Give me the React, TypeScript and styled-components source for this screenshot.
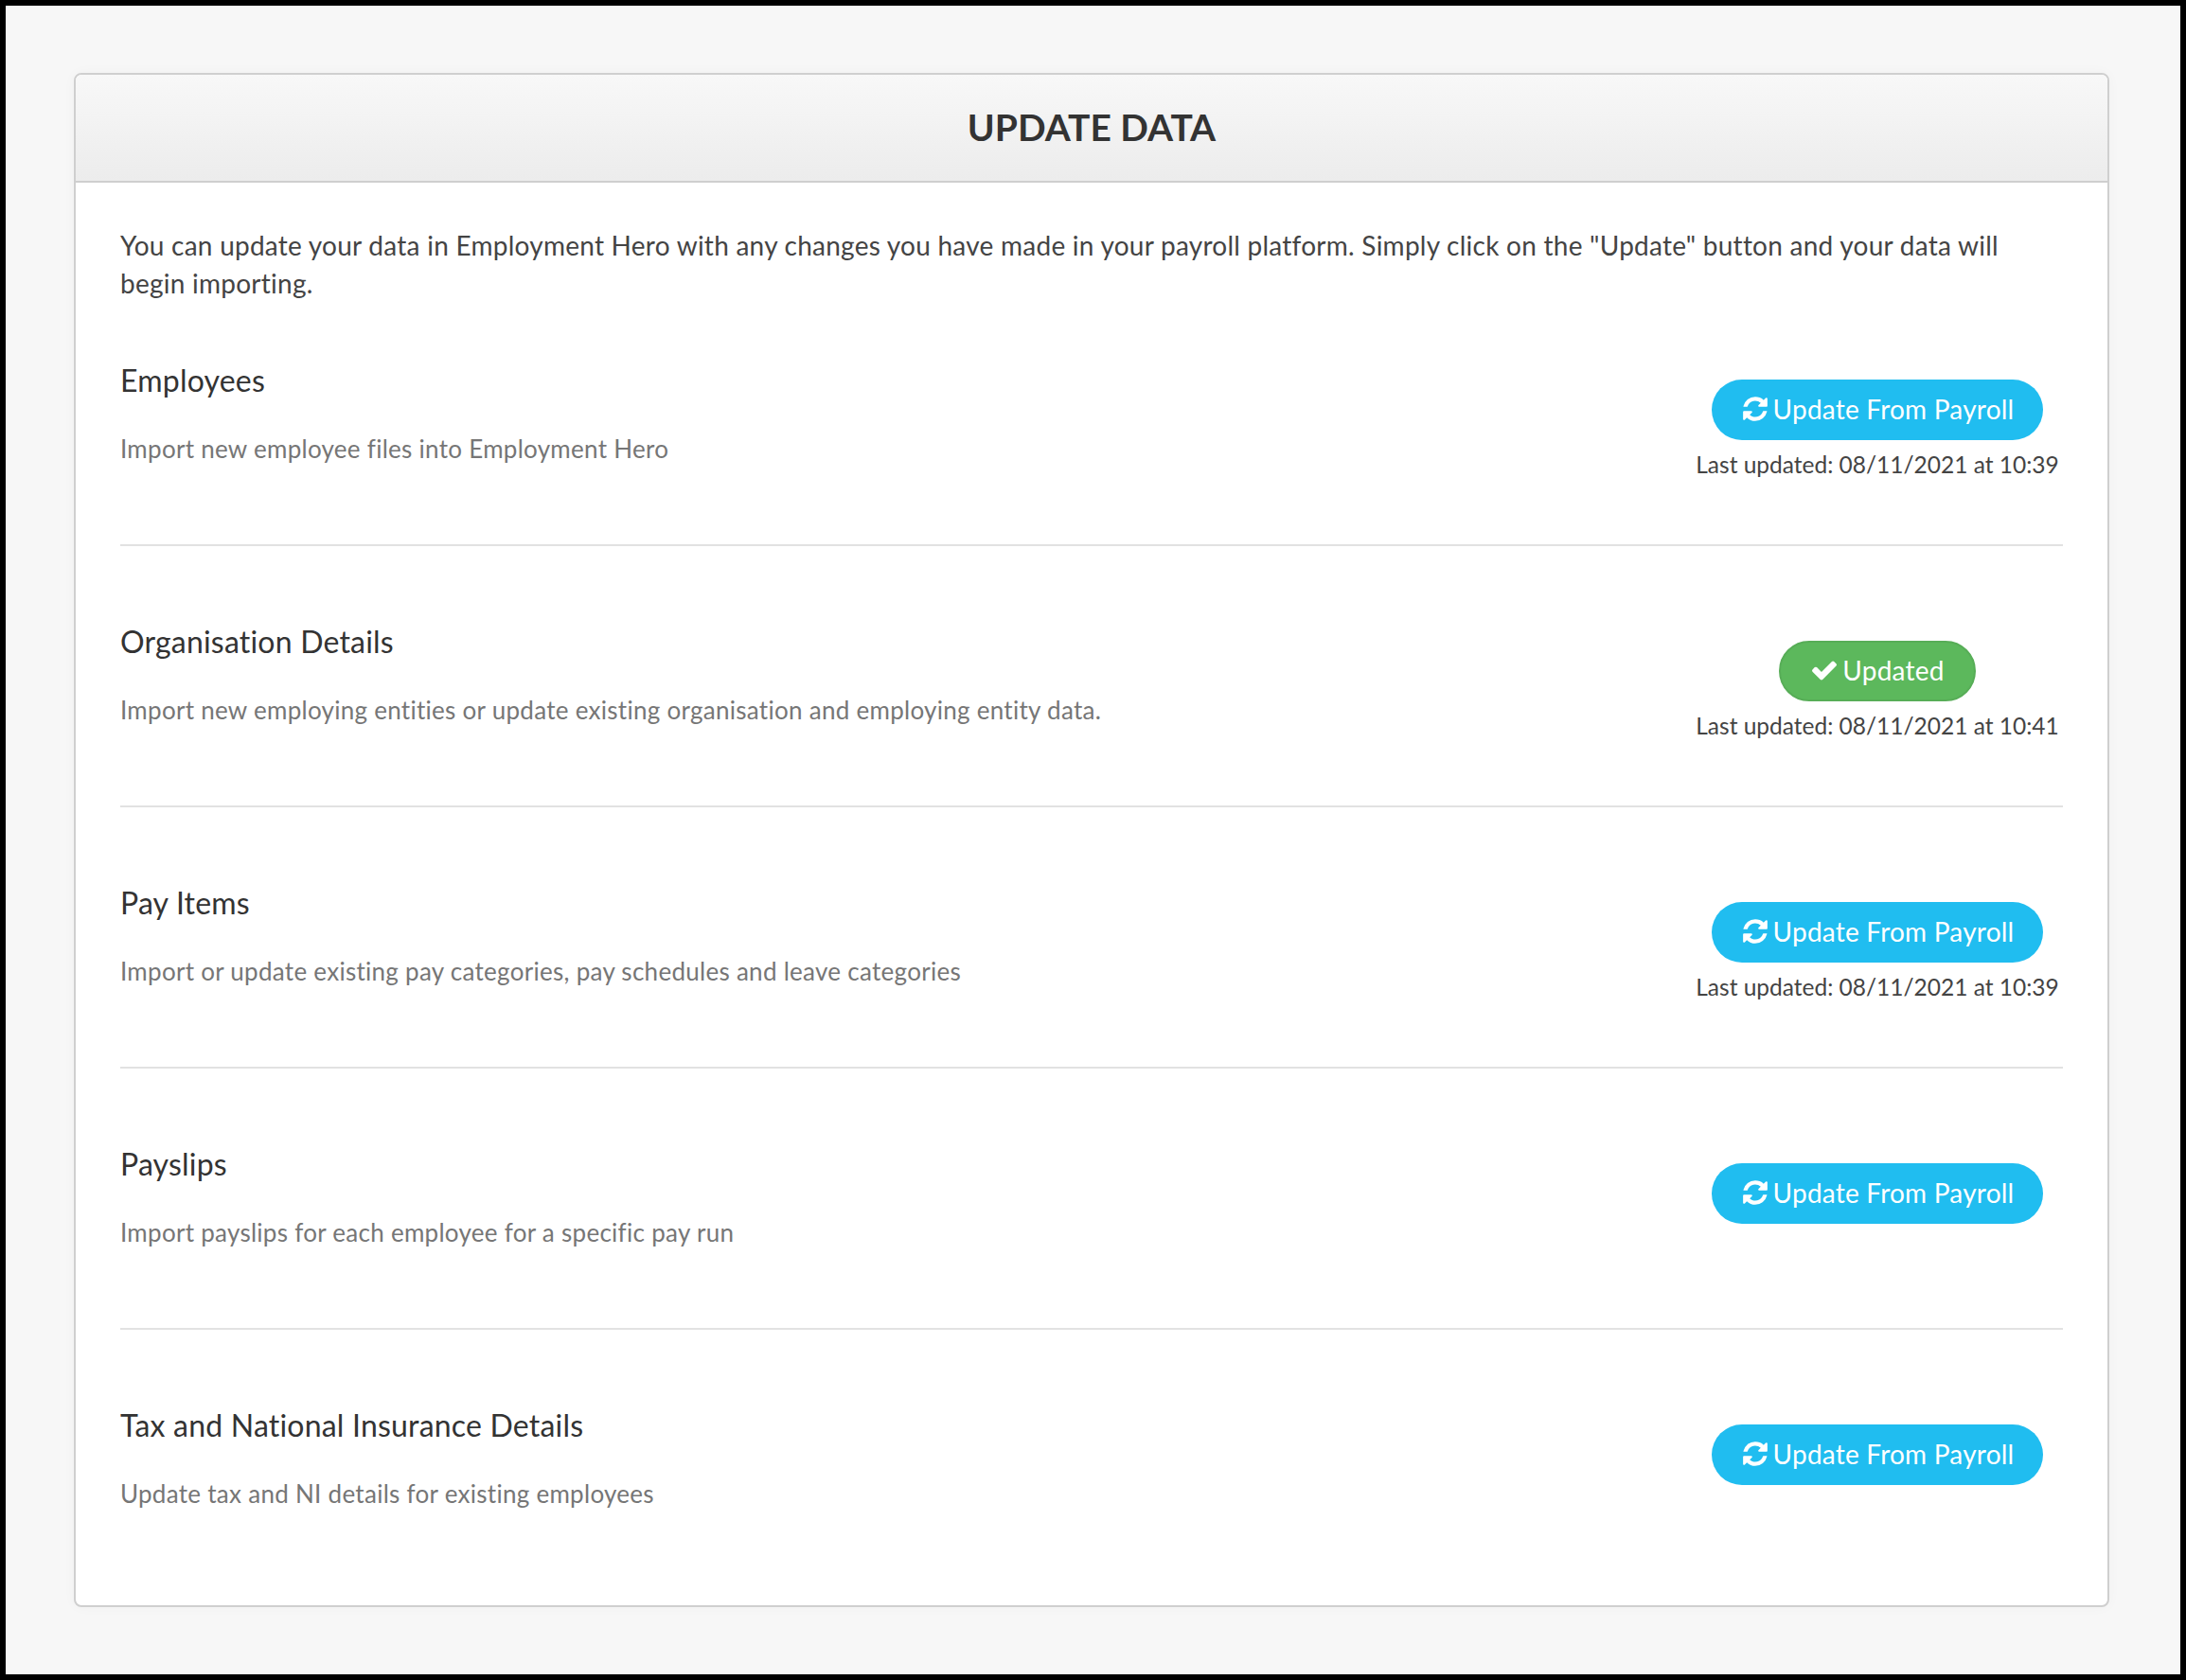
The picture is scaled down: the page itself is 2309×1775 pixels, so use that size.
import React from "react";
import styled, { createGlobalStyle } from "styled-components";

const Global = createGlobalStyle`
  html, body { margin: 0; padding: 0; background: #000; }
  * { box-sizing: border-box; }
`;
const Frame = styled.div`
  width: 2309px;
  height: 1775px;
  border: 6px solid #000;
  background: #f7f7f7;
  padding: 71px 75px 71px 72px;
  font-family: "Lato", "Liberation Sans", sans-serif;
  font-variant-ligatures: none;
  color: #333;
`;
const Card = styled.section`
  height: 1621px;
  background: #fff;
  border: 2px solid #cfcfcf;
  border-radius: 8px;
  box-shadow: 0 0 14px rgba(0, 0, 0, 0.03);
  overflow: hidden;
`;
const Header = styled.header`
  height: 114px;
  padding-bottom: 3px;
  display: flex;
  align-items: center;
  justify-content: center;
  background: linear-gradient(#f8f8f8, #ececec);
  border-bottom: 2px solid #cfcfcf;
`;
const Title = styled.h1`
  margin: 0;
  font-size: 39px;
  font-weight: 700;
  color: #333;
`;
const Body = styled.div`
  padding: 46px 47px 0 47px;
`;
const Intro = styled.p`
  max-width: 2020px;
  margin: 0 0 63px;
  font-size: 28px;
  line-height: 40px;
  letter-spacing: 0.25px;
  color: #444;
`;
const Row = styled.div<{ $last?: boolean }>`
  height: 195px;
  margin-bottom: 81px;
  display: flex;
  justify-content: space-between;
  align-items: flex-start;
  border-bottom: ${(p) => (p.$last ? "none" : "2px solid #e2e2e2")};
`;
const Info = styled.div`
  display: flex;
  flex-direction: column;
`;
const RowTitle = styled.h2`
  margin: 0 0 34px;
  font-size: 32px;
  line-height: 40px;
  letter-spacing: 0.2px;
  font-weight: 400;
  color: #333;
`;
const Desc = styled.p`
  margin: 0;
  font-size: 26px;
  line-height: 36px;
  letter-spacing: 0.28px;
  color: #767676;
`;
const Actions = styled.div`
  width: 392px;
  display: flex;
  flex-direction: column;
  align-items: center;
  padding-top: 19px;
`;
const Pill = styled.div<{ $tone: "blue" | "green" }>`
  height: 64px;
  padding: 0 31px 2px;
  display: flex;
  align-items: center;
  gap: 4px;
  border-radius: 32px;
  font-size: 28px;
  letter-spacing: 0.22px;
  color: #fff;
  background: ${(p) => (p.$tone === "blue" ? "#20bdf0" : "#5cb85c")};
  border: ${(p) => (p.$tone === "blue" ? "none" : "2px solid #57ad57")};
`;
const Glyph = styled.svg`
  width: 30px;
  height: 30px;
  flex: none;
  fill: #fff;
`;
const Stamp = styled.div`
  margin-top: 8px;
  font-size: 24.5px;
  line-height: 36px;
  color: #444;
  white-space: nowrap;
`;

const RefreshIcon = () => (
  <Glyph viewBox="0 0 1792 1792">
    <path d="M1639 1056q0 5-1 7-64 268-268 434.5t-478 166.5q-146 0-282.5-55t-243.5-157l-129 129q-19 19-45 19t-45-19-19-45v-448q0-26 19-45t45-19h448q26 0 45 19t19 45-19 45l-137 137q71 66 161 102t187 36q134 0 250-65t186-179q11-17 53-117 8-23 30-23h192q13 0 22.5 9.5t9.5 22.5zm25-800v448q0 26-19 45t-45 19h-448q-26 0-45-19t-19-45 19-45l138-138q-148-137-349-137-134 0-250 65t-186 179q-11 17-53 117-8 23-30 23h-199q-13 0-22.5-9.5t-9.5-22.5v-7q65-268 270-434.5t480-166.5q146 0 284 55.5t245 156.5l130-129q19-19 45-19t45 19 19 45z" />
  </Glyph>
);
const CheckIcon = () => (
  <Glyph viewBox="0 0 1792 1792">
    <path d="M1671 566q0 40-28 68l-724 724-136 136q-28 28-68 28t-68-28l-136-136-362-362q-28-28-28-68t28-68l136-136q28-28 68-28t68 28l294 295 656-657q28-28 68-28t68 28l136 136q28 28 28 68z" />
  </Glyph>
);

const rows = [
  { t: "Employees", d: "Import new employee files into Employment Hero", s: "Last updated: 08/11/2021 at 10:39" },
  { t: "Organisation Details", d: "Import new employing entities or update existing organisation and employing entity data.", s: "Last updated: 08/11/2021 at 10:41", done: true },
  { t: "Pay Items", d: "Import or update existing pay categories, pay schedules and leave categories", s: "Last updated: 08/11/2021 at 10:39" },
  { t: "Payslips", d: "Import payslips for each employee for a specific pay run" },
  { t: "Tax and National Insurance Details", d: "Update tax and NI details for existing employees" },
];

export default function App() {
  return (
    <Frame>
      <Global />
      <Card>
        <Header><Title>UPDATE DATA</Title></Header>
        <Body>
          <Intro>
            You can update your data in Employment Hero with any changes you have made in your payroll platform. Simply click on the "Update" button and your data will begin importing.
          </Intro>
          {rows.map((r, i) => (
            <Row key={r.t} $last={i === rows.length - 1}>
              <Info>
                <RowTitle>{r.t}</RowTitle>
                <Desc>{r.d}</Desc>
              </Info>
              <Actions>
                {r.done ? (
                  <Pill $tone="green"><CheckIcon />Updated</Pill>
                ) : (
                  <Pill $tone="blue"><RefreshIcon />Update From Payroll</Pill>
                )}
                {r.s && <Stamp>{r.s}</Stamp>}
              </Actions>
            </Row>
          ))}
        </Body>
      </Card>
    </Frame>
  );
}
